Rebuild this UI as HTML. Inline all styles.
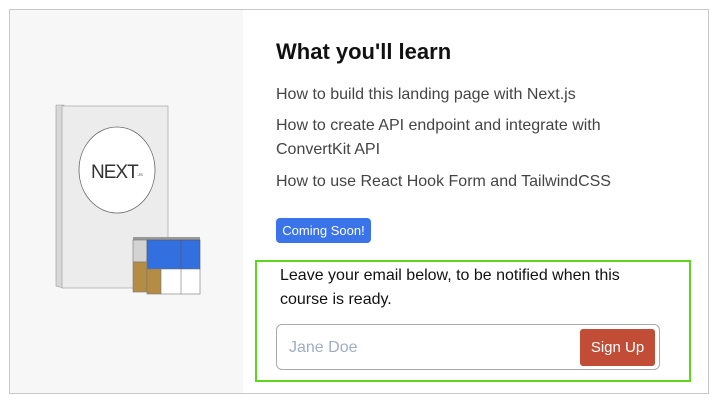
<!DOCTYPE html>
<html><head><style>
*{margin:0;padding:0;box-sizing:border-box}
body{width:717px;height:402px;background:#fff;font-family:"Liberation Sans",sans-serif;position:relative;overflow:hidden}
.frame{position:absolute;left:9px;top:9px;width:700px;height:385px;border:1px solid #c8c8c8}
.left{position:absolute;left:10px;top:10px;width:233px;height:383px;background:#f7f7f7}
.abs{position:absolute}
h1{position:absolute;left:276px;top:39px;font-size:22px;font-weight:bold;color:#111}
.li{position:absolute;left:276px;font-size:16px;color:#444;line-height:24px}
.badge{position:absolute;left:276px;top:218px;width:95px;height:25px;background:#3b73e8;color:#fff;border-radius:4px;font-size:13px;text-align:center;line-height:25px}
.green{position:absolute;left:255px;top:260px;width:436px;height:122px;border:2px solid #5fd520}
.gt{position:absolute;left:280px;top:264px;font-size:16px;color:#111;line-height:24px}
.inp{position:absolute;left:276px;top:324px;width:384px;height:46px;border:1px solid #aaa;border-radius:6px}
.ph{position:absolute;left:289px;top:339px;font-size:16px;color:#a0aec0}
.btn{position:absolute;left:580px;top:329px;width:75px;height:37px;background:#c24d37;border-radius:3px;color:#fff;font-size:15px;text-align:center;line-height:37px}
</style></head><body>
<div class="frame"></div>
<div class="left"></div>
<svg class="abs" style="left:0;top:0" width="243" height="402">
<polygon points="56,105 64,105 64,288 56,286" fill="#d8d8d8" stroke="#999" stroke-width="0.6"/>
<rect x="62" y="106" width="106" height="182" fill="#ececec" stroke="#999" stroke-width="0.6"/>
<ellipse cx="117" cy="170" rx="38" ry="43" fill="#fff" stroke="#666" stroke-width="0.8"/>
<text x="91" y="178" font-family="Liberation Sans" font-size="19" fill="#333" letter-spacing="-1">NEXT</text>
<text x="137" y="176" font-size="4" fill="#333">.JS</text>
<polygon points="133,237 200,237 200,246 133,246" fill="#999"/>
<rect x="133" y="240" width="14" height="22" fill="#d3d3d3" stroke="#777" stroke-width="0.6"/>
<rect x="147" y="240" width="53" height="29" fill="#3270e0" stroke="#555" stroke-width="0.6"/>
<line x1="181" y1="240" x2="181" y2="269" stroke="#555" stroke-width="0.6"/>
<rect x="133" y="262" width="14" height="30" fill="#b48c44" stroke="#777" stroke-width="0.6"/>
<rect x="147" y="269" width="14" height="25" fill="#b48c44" stroke="#777" stroke-width="0.6"/>
<rect x="161" y="269" width="39" height="25" fill="#fff" stroke="#777" stroke-width="0.6"/>
<line x1="181" y1="269" x2="181" y2="294" stroke="#777" stroke-width="0.6"/>
</svg>
<h1>What you'll learn</h1>
<div class="li" style="top:83px">How to build this landing page with Next.js</div>
<div class="li" style="top:114px">How to create API endpoint and integrate with<br>ConvertKit API</div>
<div class="li" style="top:170px">How to use React Hook Form and TailwindCSS</div>
<div class="badge">Coming Soon!</div>
<div class="green"></div>
<div class="gt">Leave your email below, to be notified when this<br>course is ready.</div>
<div class="inp"></div>
<div class="ph">Jane Doe</div>
<div class="btn">Sign Up</div>
</body></html>
